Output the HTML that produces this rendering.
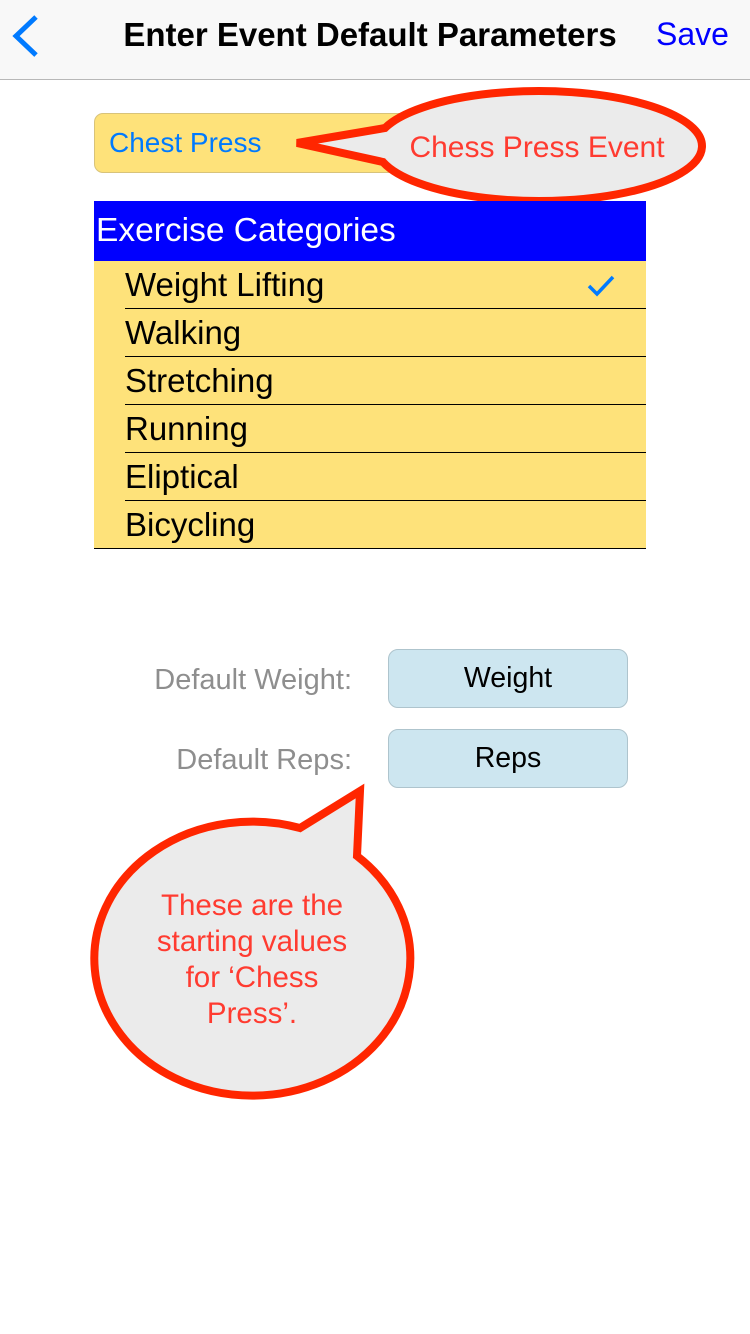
<!DOCTYPE html>
<html><head><meta charset="utf-8"><style>
body{margin:0;width:750px;height:1334px;background:#fff;position:relative;overflow:hidden;font-family:"Liberation Sans",sans-serif}
.a{position:absolute}
.nav{left:0;top:0;width:750px;height:79px;background:#f8f8f8;border-bottom:1px solid #b8b8b8}
.row{left:94px;width:552px;height:48px;background:#fee27a}
.row span{position:absolute;left:31px;top:5px;font-size:33px;color:#000}
.row i{position:absolute;left:31px;right:0;bottom:0;height:1px;background:#000}
.btn{left:388px;width:238px;height:57px;background:#cde6f0;border:1px solid #aec4cd;border-radius:10px;text-align:center;line-height:57px;font-size:28.5px;color:#000}
.lbl{right:398px;font-size:29px;color:#8e8e8e}
</style></head><body>
<div class="a nav"></div>
<svg class="a" style="left:10px;top:14px" width="30" height="44"><path d="M26 3 L6 22 L26 41" fill="none" stroke="#007aff" stroke-width="5"/></svg>
<div class="a" style="left:0;width:740px;text-align:center;top:16px;font-size:33px;font-weight:bold;color:#000">Enter Event Default Parameters</div>
<div class="a" style="left:656px;top:16px;font-size:32px;color:#0000ff">Save</div>
<div class="a" style="left:94px;top:113px;width:552px;height:58px;background:#fee27a;border:1px solid #d8c37a;border-radius:9px"></div>
<div class="a" style="left:109px;top:127px;font-size:28px;color:#007aff">Chest Press</div>
<svg class="a" style="left:0;top:0" width="750" height="1334">
<path d="M385 128 A163 55 0 1 1 383 162 L297 143 Z" fill="#ebebeb" stroke="#ff2600" stroke-width="8" stroke-linejoin="miter"/>
<path d="M300 828 A158 137 0 1 0 357 856 L360 791 Z" fill="#ebebeb" stroke="#ff2600" stroke-width="8"/>
<text x="537" y="157" text-anchor="middle" font-size="30" fill="#ff3b30" font-family="Liberation Sans">Chess Press Event</text>
<g font-size="29.5" fill="#ff3b30" font-family="Liberation Sans" text-anchor="middle">
<text x="252" y="915">These are the</text>
<text x="252" y="951">starting values</text>
<text x="252" y="987">for ‘Chess</text>
<text x="252" y="1023">Press’.</text>
</g>
</svg>
<div class="a" style="left:94px;top:201px;width:552px;height:60px;background:#0000ff"></div>
<div class="a" style="left:96px;top:212px;font-size:33.5px;color:#fff">Exercise Categories</div>
<div class="a row" style="top:261px"><span>Weight Lifting</span><i></i></div>
<div class="a row" style="top:309px"><span>Walking</span><i></i></div>
<div class="a row" style="top:357px"><span>Stretching</span><i></i></div>
<div class="a row" style="top:405px"><span>Running</span><i></i></div>
<div class="a row" style="top:453px"><span>Eliptical</span><i></i></div>
<div class="a row" style="top:501px"><span>Bicycling</span><i style="left:0"></i></div>
<svg class="a" style="left:586px;top:274px" width="30" height="24"><path d="M3 12 L11 20 L27 3" fill="none" stroke="#007aff" stroke-width="3.5"/></svg>
<div class="a lbl" style="top:664px">Default Weight:</div>
<div class="a lbl" style="top:744px">Default Reps:</div>
<div class="a btn" style="top:649px">Weight</div>
<div class="a btn" style="top:729px">Reps</div>
</body></html>
